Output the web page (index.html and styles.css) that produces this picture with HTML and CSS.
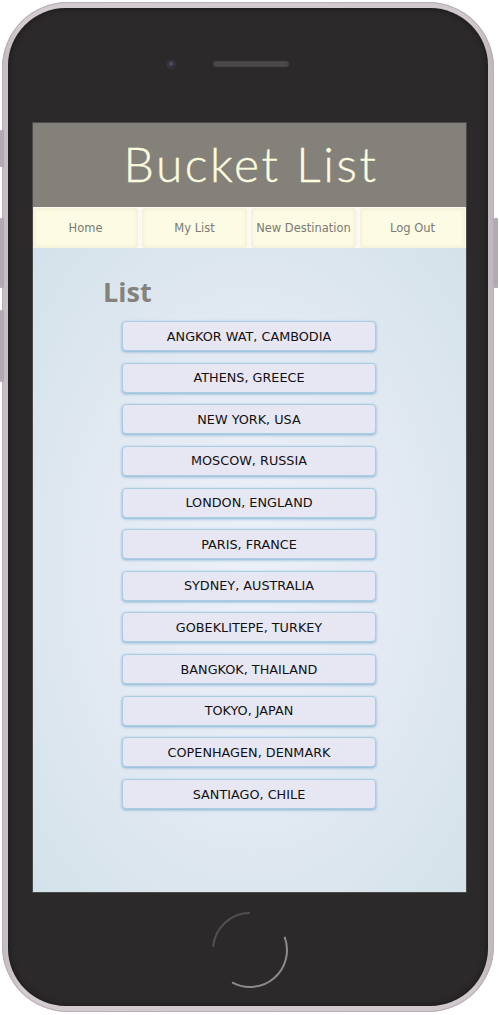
FILE: index.html
```html
<!DOCTYPE html>
<html lang="en">
<head>
<meta charset="utf-8">
<title>Bucket List</title>
<link rel="stylesheet" href="styles.css">
</head>
<body>
<div class="phone">
  <span class="side-btn side-l1"></span>
  <span class="side-btn side-l2"></span>
  <span class="side-btn side-l3"></span>
  <span class="side-btn side-r1"></span>
  <div class="bezel">
    <div class="top-area">
      <span class="camera"></span>
      <span class="speaker"></span>
    </div>
    <div class="screen">
      <header class="app-header">
        <h1 class="app-title">Bucket List</h1>
      </header>
      <nav class="app-nav">
        <a class="nav-btn">Home</a>
        <a class="nav-btn">My List</a>
        <a class="nav-btn">New Destination</a>
        <a class="nav-btn">Log Out</a>
      </nav>
      <main class="content">
        <h2 class="list-title">List</h2>
        <ul class="dest-list">
          <li class="dest">Angkor Wat, Cambodia</li>
          <li class="dest">Athens, Greece</li>
          <li class="dest">New York, USA</li>
          <li class="dest">Moscow, Russia</li>
          <li class="dest">London, England</li>
          <li class="dest">Paris, France</li>
          <li class="dest">Sydney, Australia</li>
          <li class="dest">Gobeklitepe, Turkey</li>
          <li class="dest">Bangkok, Thailand</li>
          <li class="dest">Tokyo, Japan</li>
          <li class="dest">Copenhagen, Denmark</li>
          <li class="dest">Santiago, Chile</li>
        </ul>
      </main>
    </div>
    <div class="bottom-area">
      <svg class="home-btn" width="80" height="80" viewBox="0 0 80 80">
        <path d="M40 3 A37 37 0 0 0 3.14 36.77" fill="none" stroke="#525051" stroke-width="2"/>
        <path d="M22.06 72.36 A37 37 0 0 0 74.54 26.74" fill="none" stroke="#8c8a8b" stroke-width="2"/>
      </svg>
    </div>
  </div>
</div>
</body>
</html>
```
FILE: styles.css
```css
* { box-sizing: border-box; }
html, body { margin: 0; padding: 0; background: #ffffff; }
body { font-family: "DejaVu Sans", sans-serif; }

.phone {
  position: relative;
  margin: 2px 0 0 2px;
  width: 492px;
  height: 1010px;
  padding: 6px;
  border-radius: 66px;
  background: linear-gradient(90deg, #c4bac1 0%, #d3cbd0 4%, #d0c8cd 96%, #bfb5bc 100%);
  box-shadow: inset 0 0 0 1px #b9afb6;
}
.side-btn {
  position: absolute;
  width: 4px;
  background: #b3a9b0;
  border-radius: 1px;
}
.side-l1 { left: -2px; top: 128px; height: 37px; }
.side-l2 { left: -2px; top: 216px; height: 70px; }
.side-l3 { left: -2px; top: 308px; height: 72px; }
.side-r1 { right: -4px; top: 216px; height: 70px; }

.bezel {
  height: 100%;
  border-radius: 58px;
  background: #2b292a;
  box-shadow: inset 0 0 6px rgba(0,0,0,0.5);
  display: flex;
  flex-direction: column;
  padding: 0 21px 0 24px;
}

.top-area {
  height: 114px;
  display: flex;
  align-items: center;
  padding-left: 136px;
  padding-bottom: 2px;
  gap: 38px;
}
.camera {
  width: 7px;
  height: 7px;
  border-radius: 50%;
  background: radial-gradient(circle at 45% 40%, #5a5a66 0%, #2e2c35 60%, #1b1a1e 100%);
  box-shadow: 0 0 0 1px #3b3a40;
}
.speaker {
  width: 76px;
  height: 6px;
  border-radius: 3px;
  background: #4a4849;
  box-shadow: inset 0 0 1px #2a2829;
}

.screen {
  height: 771px;
  border: 1px solid #4a4a4a;
  display: flex;
  flex-direction: column;
  overflow: hidden;
}

.app-header {
  height: 84px;
  background: #84817a;
  display: flex;
  align-items: center;
  justify-content: center;
}
.app-title {
  margin: 0;
  font-family: "Lato", sans-serif;
  font-weight: 300;
  font-size: 48px;
  letter-spacing: 2.6px;
  color: #fdfbdf;
  line-height: 1;
  padding: 0 0 2px 3px;
  -webkit-text-stroke: 0.4px #fdfbdf;
}

.app-nav {
  height: 41px;
  background: #fafaf2;
  display: grid;
  grid-template-columns: repeat(4, 1fr);
  gap: 4px;
  padding: 1px 1px 0 0;
}
.nav-btn {
  display: flex;
  align-items: center;
  justify-content: center;
  background: #fcfbe3;
  border-radius: 4px;
  box-shadow: inset 0 0 4px #e8e6c8;
  font-size: 11.5px;
  color: #7c7a74;
  padding-bottom: 1px;
}

.content {
  flex: 1;
  background: radial-gradient(ellipse at 50% 50%, #ecf0f9 0%, #e4eaf3 45%, #d3e2ea 100%);
  padding: 28px 0 0 70px;
}
.list-title {
  margin: 0;
  font-family: "Open Sans", sans-serif;
  font-weight: 700;
  font-size: 27px;
  color: #85827c;
  line-height: 32px;
}
.dest-list {
  list-style: none;
  margin: 13px 0 0 19px;
  padding: 0;
  width: 254px;
  display: flex;
  flex-direction: column;
  gap: 11.65px;
}
.dest {
  height: 30px;
  display: flex;
  align-items: center;
  justify-content: center;
  background: #e7e6f3;
  border: 1px solid #aacde4;
  border-radius: 4px;
  box-shadow: 0 1px 3px #7fb0d4;
  text-transform: uppercase;
  font-size: 12.8px;
  color: #111111;
}

.bottom-area {
  flex: 1;
  display: flex;
  align-items: center;
  justify-content: center;
}
.home-btn { display: block; }
```
